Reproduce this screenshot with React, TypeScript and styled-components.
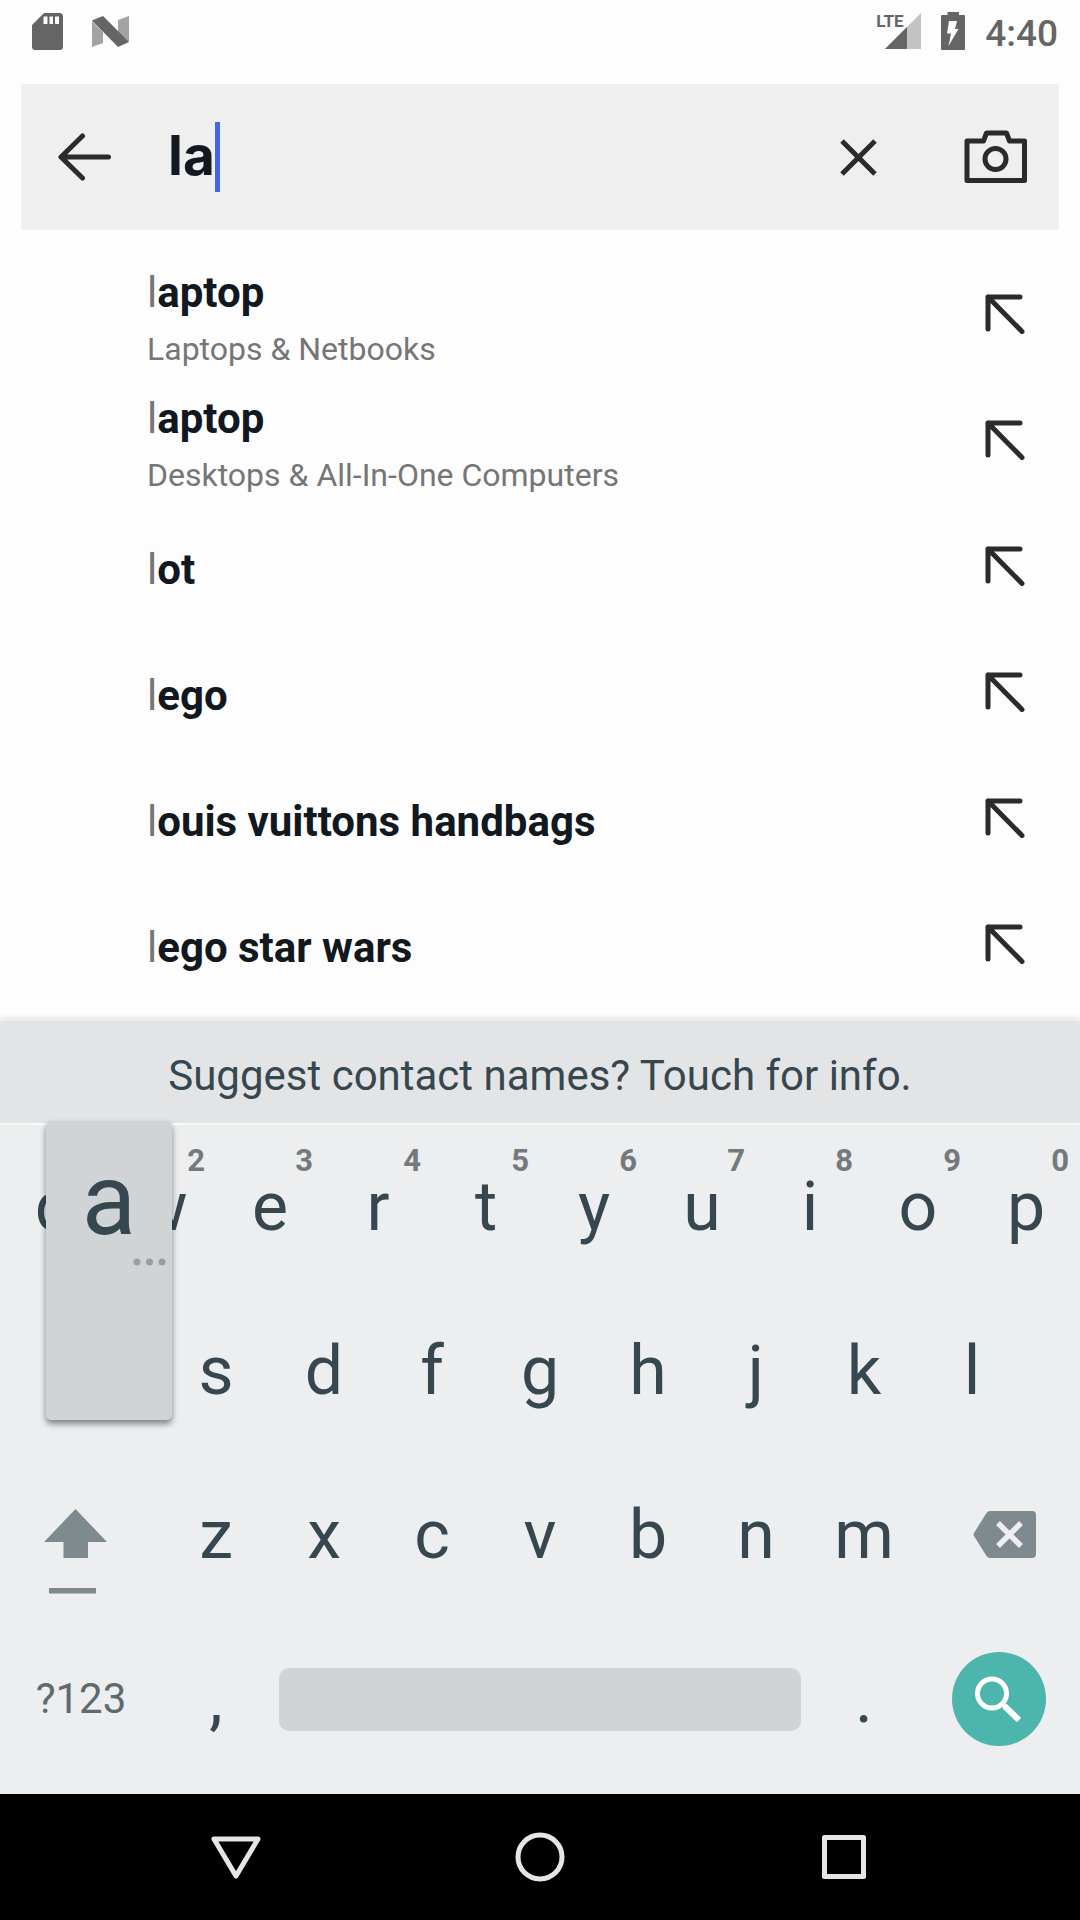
import React, { useState } from 'react';
import styled, { createGlobalStyle } from 'styled-components';

const ink = '#2b2b2b';
const keyInk = '#37474f';
const keyMuted = '#7f8a8f';

const GlobalStyle = createGlobalStyle`
  *, *::before, *::after { box-sizing: border-box; }
  body { margin: 0; background: #fdfdfd; font-family: Roboto, "Noto Sans", sans-serif; }
  button { margin: 0; padding: 0; border: 0; background: none; font: inherit; color: inherit; cursor: pointer; }
  svg { display: block; flex: none; }
`;

const Screen = styled.div`
  display: flex;
  flex-direction: column;
  min-height: 100vh;
  overflow-x: hidden;
`;

const StatusBar = styled.header`
  display: flex;
  justify-content: space-between;
  height: 84px;
  padding: 12px 22px 0 32px;
  color: #656565;
`;

const StatusGroup = styled.div<{ $gap: number }>`
  display: flex;
  align-items: flex-start;
  gap: ${(p) => p.$gap}px;
`;

const Signal = styled.div`
  position: relative;
  padding-left: 9px;
`;

const NetworkLabel = styled.span`
  position: absolute;
  left: 0;
  top: 1px;
  font: 700 17px/17px "Liberation Sans Narrow", Roboto, sans-serif;
`;

const Clock = styled.time`
  font-size: 37px;
  font-weight: 500;
  line-height: 44px;
`;

const SearchBar = styled.form`
  display: flex;
  align-items: center;
  height: 146px;
  margin: 0 21px;
  padding: 0 31px 0 37px;
  border-radius: 4px;
  background: #efefef;
`;

const Field = styled.label`
  display: flex;
  flex: 1;
  align-items: center;
  min-width: 0;
  height: 70px;
  margin-left: 56px;
`;

const Query = styled.input`
  field-sizing: content;
  min-width: 0;
  height: 70px;
  padding: 0 0 4px;
  border: 0;
  outline: 0;
  background: none;
  color: #111820;
  caret-color: transparent;
  font: 700 55px/66px Inter, sans-serif;
`;

const Caret = styled.span`
  width: 5px;
  height: 70px;
  background: #4266e4;
`;

const BarActions = styled.div`
  display: flex;
  align-items: center;
  gap: 87px;
`;

const Suggestions = styled.ul`
  flex: 1;
  margin: 0;
  padding: 21px 0 14px;
  list-style: none;
`;

const Suggestion = styled.li`
  display: flex;
  align-items: center;
  justify-content: space-between;
  height: 126px;
  padding: 0 55px 0 147px;
`;

const SuggestionLink = styled.a`
  display: flex;
  flex: 1;
  flex-direction: column;
  gap: 6px;
  padding-top: 7px;
  color: #111820;
  text-decoration: none;
`;

const Term = styled.span`
  font-size: 42px;
  font-weight: 700;
  line-height: 56px;
`;

const Typed = styled.span`
  color: #767676;
  font-weight: 400;
`;

const Category = styled.span`
  color: #767676;
  font-size: 32px;
  line-height: 44px;
`;

const Keyboard = styled.section`
  background: #eceeef;
  color: ${keyInk};
  box-shadow: 0 -4px 4px #ebebeb;
`;

const Hint = styled.button`
  display: block;
  width: 100%;
  height: 104px;
  padding-top: 7px;
  border-bottom: 2px solid #f8f9f9;
  background: #e3e4e5;
  font-size: 42px;
  line-height: 50px;
`;

const Keys = styled.div`
  padding-bottom: 13px;
`;

const KeyRow = styled.div<{ $inset?: boolean }>`
  display: grid;
  grid-template-columns: repeat(${(p) => (p.$inset ? 18 : 20)}, 1fr);
  height: 164px;
  padding: 0 ${(p) => (p.$inset ? '5%' : '0')};
`;

const Key = styled.button<{ $span?: number }>`
  position: relative;
  display: flex;
  grid-column: span ${(p) => p.$span ?? 2};
  align-items: center;
  justify-content: center;
  min-width: 0;
  font-size: 68px;
  line-height: 80px;
`;

const ShiftKey = styled(Key)`
  padding-right: 10px;
`;

const BackspaceKey = styled(Key)`
  padding-left: 12px;
`;

const SymbolKey = styled(Key)`
  color: #5d6b71;
  font-size: 42px;
`;

const KeyDigit = styled.span`
  position: absolute;
  top: 20px;
  right: 11px;
  color: #737a7d;
  font-size: 31px;
  font-weight: 700;
  line-height: 32px;
`;

const SpaceBar = styled.span`
  flex: 1;
  height: 63px;
  margin: 0 9px;
  border-radius: 10px;
  background: #d0d4d7;
`;

const SearchDisc = styled.span`
  display: grid;
  place-items: center;
  width: 94px;
  height: 94px;
  border-radius: 50%;
  background: #4db6ac;
`;

const KeyPopup = styled.span`
  position: absolute;
  z-index: 1;
  top: -168px;
  right: -10px;
  bottom: 33px;
  left: -8px;
  display: flex;
  flex-direction: column;
  align-items: center;
  padding-top: 29px;
  border-radius: 5px;
  background: #d0d4d7;
  box-shadow: 0 4px 6px rgba(0, 0, 0, 0.45);
  font-size: 100px;
  line-height: 100px;
`;

const MoreDots = styled.svg`
  align-self: flex-end;
  margin: 8px 4px 0 0;
`;

const NavBar = styled.nav`
  display: flex;
  height: 126px;
  padding: 0 84px;
  background: #000;
`;

const NavButton = styled.button`
  display: grid;
  flex: 1;
  place-items: center;
`;

const SdCardIcon = () => (
  <svg width="31" height="38" viewBox="0 0 31 38">
    <path
      fill="#656565"
      fillRule="evenodd"
      d="M12 1H27.500Q31 1 31 4.500V35Q31 38 27.500 38H3.500Q0 38 0 35V13ZM11.500 4.500V12H15.500V4.500ZM17.500 4.500V12H21V4.500ZM23 4.500V12H27V4.500Z"
    />
  </svg>
);

const NougatIcon = () => (
  <svg width="38" height="38" viewBox="0 0 38 38">
    <path fill="#a3a3a3" d="M0 9 11 20V31L0 35ZM37 4V30L26 20V8Z" />
    <path fill="#656565" d="M0 8.500 11 4 37 30 26 35Z" />
  </svg>
);

const SignalIcon = () => (
  <svg width="36" height="38" viewBox="0 0 36 38">
    <path fill="#c3c3c3" d="M36 1V37H0Z" />
    <path fill="#656565" d="M22 15V37H0Z" />
  </svg>
);

const BatteryIcon = () => (
  <svg width="24" height="38" viewBox="0 0 24 38">
    <path fill="#656565" d="M6.500 0H18V3H23Q24 3 24 4V37Q24 38 23 38H1Q0 38 0 37V4Q0 3 1 3H6.500Z" />
    <path fill="#fdfdfd" d="M8 9H16L14 17H17.500L7.500 34 10 21.500H6Z" />
  </svg>
);

const BackIcon = () => (
  <svg width="54" height="48" viewBox="0 0 54 48" fill="none" stroke={ink} strokeWidth="5" strokeLinecap="round" strokeLinejoin="round">
    <path d="M50.500 24H3M24.500 3 3 24 24.500 45" />
  </svg>
);

const ClearIcon = () => (
  <svg width="37" height="37" viewBox="0 0 37 37" fill="none" stroke={ink} strokeWidth="5">
    <path d="M2 2 35 35M35 2 2 35" />
  </svg>
);

const CameraIcon = () => (
  <svg width="64" height="54" viewBox="0 0 64 54" fill="none" stroke={ink} strokeWidth="5" strokeLinejoin="round">
    <path d="M3 11H19.500L22.500 3H42.500L45.500 11H60.500V50.500H3Z" />
    <circle cx="31.500" cy="29" r="10.500" />
  </svg>
);

const FillArrowIcon = () => (
  <svg width="40" height="40" viewBox="0 0 40 40" fill="none" stroke={ink} strokeWidth="5" strokeLinecap="round" strokeLinejoin="round">
    <path d="M35 3H3V35M3 3 37 37.500" />
  </svg>
);

const ShiftIcon = () => (
  <svg width="64" height="120" viewBox="0 0 64 120" fill={keyMuted}>
    <path d="M31.500 34 63 67H44V83H19.500V67H0Z" />
    <path d="M5 113H52V118.500H5Z" />
  </svg>
);

const BackspaceIcon = () => (
  <svg width="64" height="52" viewBox="0 0 64 52">
    <path fill={keyMuted} d="M17 2H59Q63 2 63 6V45Q63 49 59 49H17Q15 49 13.500 47L1 27Q0 25.500 1 24L13.500 4Q15 2 17 2Z" />
    <path d="M25 14 48 37M48 14 25 37" stroke="#eceeef" strokeWidth="5.500" />
  </svg>
);

const MagnifierIcon = () => (
  <svg width="50" height="50" viewBox="0 0 50 50" fill="none" stroke="#fff">
    <circle cx="18" cy="19.500" r="14.500" strokeWidth="5" />
    <path d="M27.500 29 31 32.500" strokeWidth="4" />
    <path d="M30.500 32 45 46" strokeWidth="6" />
  </svg>
);

// The digit of "q" lies under the open key preview, so it is left out.
const topRow: [string, string?][] = [
  ['q'], ['w', '2'], ['e', '3'], ['r', '4'], ['t', '5'],
  ['y', '6'], ['u', '7'], ['i', '8'], ['o', '9'], ['p', '0'],
];

const suggestions: { rest: string; category?: string }[] = [
  { rest: 'aptop', category: 'Laptops & Netbooks' },
  { rest: 'aptop', category: 'Desktops & All-In-One Computers' },
  { rest: 'ot' },
  { rest: 'ego' },
  { rest: 'ouis vuittons handbags' },
  { rest: 'ego star wars' },
];

export default function App() {
  const [query, setQuery] = useState('la');
  const type = (letter: string) => setQuery((q) => q + letter);

  return (
    <>
      <GlobalStyle />
      <Screen>
        <StatusBar>
          <StatusGroup $gap={29}>
            <SdCardIcon />
            <NougatIcon />
          </StatusGroup>
          <StatusGroup $gap={20}>
            <Signal>
              <NetworkLabel>LTE</NetworkLabel>
              <SignalIcon />
            </Signal>
            <BatteryIcon />
            <Clock>4:40</Clock>
          </StatusGroup>
        </StatusBar>

        <SearchBar onSubmit={(e) => e.preventDefault()}>
          <button type="button" aria-label="Back"><BackIcon /></button>
          <Field>
            <Query aria-label="Search" size={1} value={query} onChange={(e) => setQuery(e.target.value)} />
            <Caret />
          </Field>
          <BarActions>
            <button type="button" aria-label="Clear" onClick={() => setQuery('')}><ClearIcon /></button>
            <button type="button" aria-label="Search by image"><CameraIcon /></button>
          </BarActions>
        </SearchBar>

        <Suggestions>
          {suggestions.map(({ rest, category }, i) => (
            <Suggestion key={i}>
              <SuggestionLink href="#">
                <Term><Typed>l</Typed>{rest}</Term>
                {category && <Category>{category}</Category>}
              </SuggestionLink>
              <button type="button" aria-label={`Use l${rest}`} onClick={() => setQuery('l' + rest)}>
                <FillArrowIcon />
              </button>
            </Suggestion>
          ))}
        </Suggestions>

        <Keyboard aria-label="Keyboard">
          <Hint type="button">Suggest contact names? Touch for info.</Hint>
          <Keys>
            <KeyRow>
              {topRow.map(([letter, digit]) => (
                <Key key={letter} type="button" onClick={() => type(letter)}>
                  {letter}
                  {digit && <KeyDigit>{digit}</KeyDigit>}
                </Key>
              ))}
            </KeyRow>
            <KeyRow $inset>
              <Key type="button" onClick={() => type('a')}>
                <KeyPopup>
                  a
                  <MoreDots width="36" height="8" viewBox="0 0 36 8" fill="#93a0a5">
                    <circle cx="5" cy="4" r="3.500" />
                    <circle cx="17.500" cy="4" r="3.500" />
                    <circle cx="30" cy="4" r="3.500" />
                  </MoreDots>
                </KeyPopup>
              </Key>
              {[...'sdfghjkl'].map((letter) => (
                <Key key={letter} type="button" onClick={() => type(letter)}>{letter}</Key>
              ))}
            </KeyRow>
            <KeyRow>
              <ShiftKey type="button" $span={3} aria-label="Shift"><ShiftIcon /></ShiftKey>
              {[...'zxcvbnm'].map((letter) => (
                <Key key={letter} type="button" onClick={() => type(letter)}>{letter}</Key>
              ))}
              <BackspaceKey type="button" $span={3} aria-label="Backspace" onClick={() => setQuery((q) => q.slice(0, -1))}>
                <BackspaceIcon />
              </BackspaceKey>
            </KeyRow>
            <KeyRow>
              <SymbolKey type="button" $span={3}>?123</SymbolKey>
              <Key type="button" onClick={() => type(',')}>,</Key>
              <Key type="button" $span={10} aria-label="Space" onClick={() => type(' ')}><SpaceBar /></Key>
              <Key type="button" onClick={() => type('.')}>.</Key>
              <Key type="button" $span={3} aria-label="Search">
                <SearchDisc><MagnifierIcon /></SearchDisc>
              </Key>
            </KeyRow>
          </Keys>
        </Keyboard>

        <NavBar aria-label="System">
          <NavButton type="button" aria-label="Back">
            <svg width="50" height="50" viewBox="0 0 50 50" fill="none" stroke="#e6e6e6" strokeWidth="5" strokeLinejoin="round">
              <path d="M3 7H47L25 44Z" />
            </svg>
          </NavButton>
          <NavButton type="button" aria-label="Home">
            <svg width="50" height="50" viewBox="0 0 50 50" fill="none" stroke="#e6e6e6" strokeWidth="5">
              <circle cx="25" cy="25" r="22" />
            </svg>
          </NavButton>
          <NavButton type="button" aria-label="Overview">
            <svg width="50" height="50" viewBox="0 0 50 50" fill="none" stroke="#e6e6e6" strokeWidth="5" strokeLinejoin="round">
              <path d="M5.500 5.500H44.500V44.500H5.500Z" />
            </svg>
          </NavButton>
        </NavBar>
      </Screen>
    </>
  );
}
